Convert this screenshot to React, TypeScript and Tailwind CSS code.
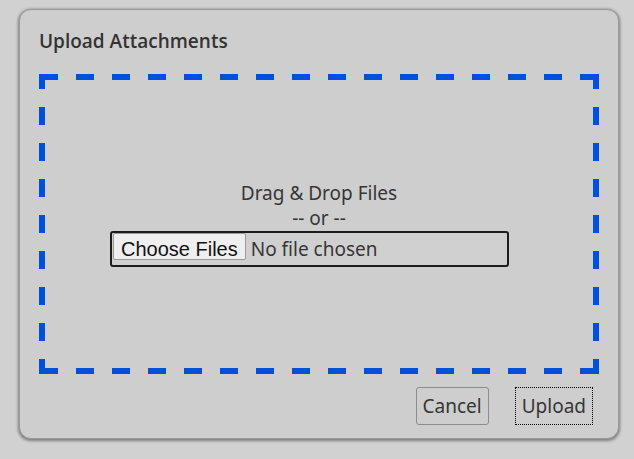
const BLUE = '#0050dc';

// Firefox-style dashed frame: L-shaped corners, 18px dashes, 18px gaps
function DashedFrame() {
  const top = Array.from({ length: 14 }, (_, i) => 37 + i * 36);
  const side = Array.from({ length: 7 }, (_, i) => 33 + i * 36);
  return (
    <svg className="absolute inset-0 pointer-events-none" width="560" height="300" viewBox="0 0 560 300">
      <g fill={BLUE}>
        {/* corners */}
        <rect x="0" y="0" width="19" height="6" />
        <rect x="0" y="0" width="6" height="15" />
        <rect x="541" y="0" width="19" height="6" />
        <rect x="554" y="0" width="6" height="15" />
        <rect x="0" y="294" width="19" height="6" />
        <rect x="0" y="285" width="6" height="15" />
        <rect x="541" y="294" width="19" height="6" />
        <rect x="554" y="285" width="6" height="15" />
        {top.map((x) => (
          <g key={'h' + x}>
            <rect x={x} y="0" width="18" height="6" />
            <rect x={x} y="294" width="18" height="6" />
          </g>
        ))}
        {side.map((y) => (
          <g key={'v' + y}>
            <rect x="0" y={y} width="6" height="18" />
            <rect x="554" y={y} width="6" height="18" />
          </g>
        ))}
      </g>
    </svg>
  );
}

export default function App() {
  return (
    <div className="min-h-screen bg-[#d1d1d1] pt-[9px] pl-[19px] font-['Noto_Sans',sans-serif] text-[#363636]">
      <div className="w-[600px] h-[430px] rounded-[12px] border border-[#9a9a9a] bg-[#cecece] shadow-[0_1px_3px_1px_rgba(0,0,0,0.4)] px-[19px] pt-[19px] pb-[13px] flex flex-col">
        <h1 className="text-[19px] font-semibold leading-[24px] h-[45px] font-['Open_Sans',sans-serif] text-[#333]">
          Upload Attachments
        </h1>

        <div className="relative w-[560px] h-[300px] flex flex-col items-center justify-center">
          <DashedFrame />
          <p className="text-[19px] leading-[25px]">Drag &amp; Drop Files</p>
          <p className="text-[19px] leading-[25px]">-- or --</p>
          <input
            type="file"
            multiple
            className="mr-[19px] w-[399px] h-[36px] border-2 border-[#1c1c1c] rounded-[3px] bg-[#d0d0d0] text-[19px] pl-[1px] text-[#363636] file:font-['Liberation_Sans',sans-serif] file:text-[20px] file:text-[#111] file:bg-[#efefef] file:border file:border-[#9a9a9a] file:rounded-[2px] file:px-[7px] file:h-[27px] file:mr-[5px]"
          />
        </div>

        <div className="flex justify-end gap-[26px] mt-[13px] pr-[6px]">
          <button className="h-[38px] px-[6px] rounded-[3px] border border-[#8c8c8c] text-[19px] text-[#363636]">
            Cancel
          </button>
          <button className="h-[38px] px-[6px] border border-dotted border-black text-[19px] text-[#363636]">
            Upload
          </button>
        </div>
      </div>
    </div>
  );
}
